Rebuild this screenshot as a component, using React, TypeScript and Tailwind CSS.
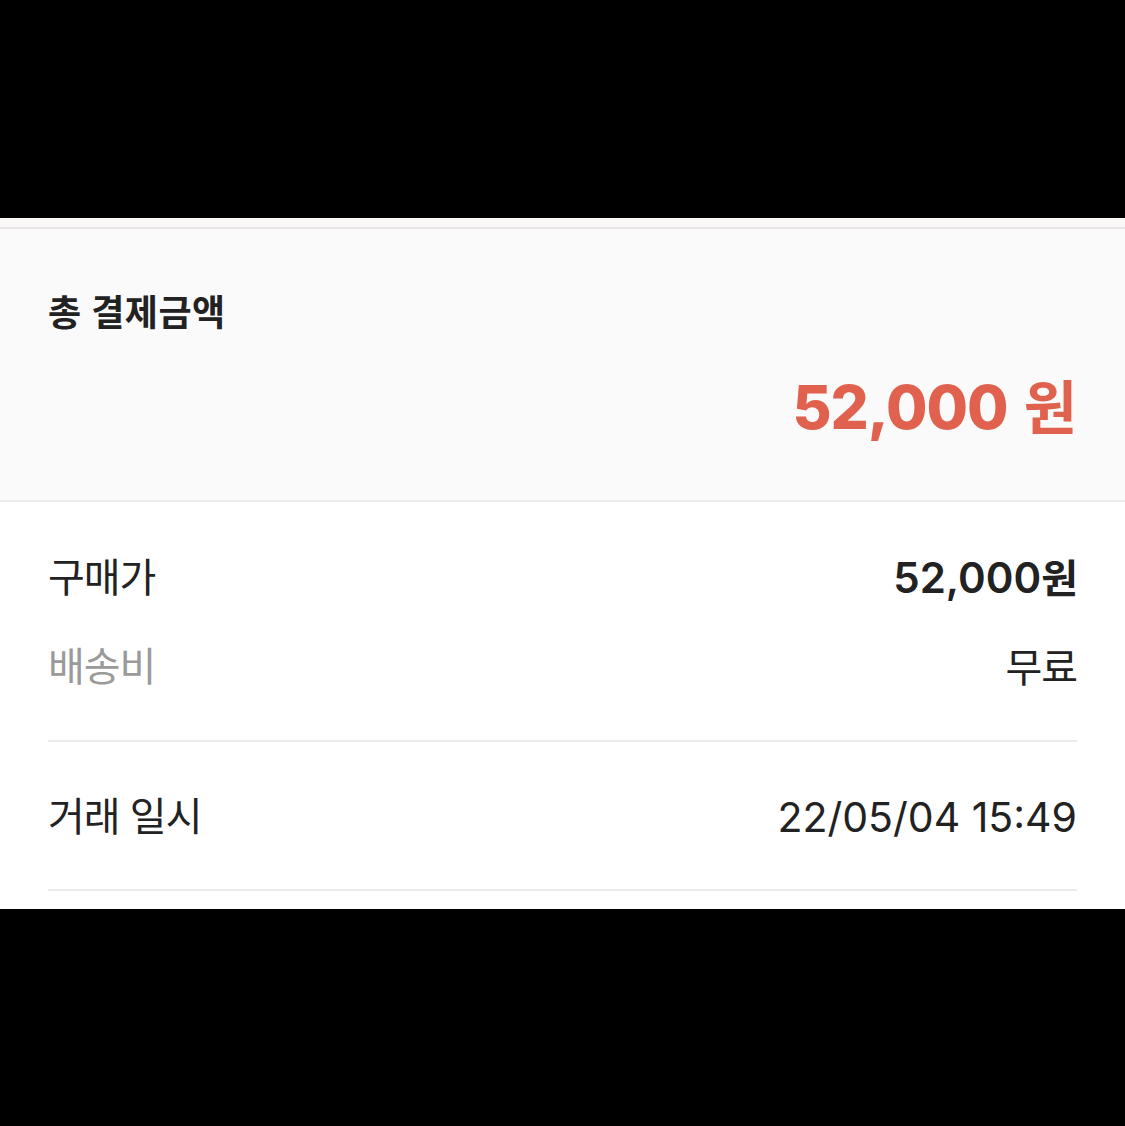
import React from 'react'

const rows = [
    { label: '구매가', value: '52,000', unit: '원', labelTone: 'text-[#222222]', bold: true },
    { label: '배송비', value: '', unit: '무료', labelTone: 'text-[#9a9a9a]', bold: false },
]

export default function App() {
    return (
        <div className="flex h-[1126px] flex-col bg-black font-['Inter','Noto_Sans_CJK_KR',sans-serif] text-[#222222]">
            <div className="h-[218px] shrink-0" />

            <div className="shrink-0 bg-white">
                {/* thin top band */}
                <div className="h-[9px] bg-[#faf7f7]" />
                <div className="h-[2px] bg-[#e7e5e7]" />

                {/* total panel */}
                <div className="flex flex-col border-b-2 border-[#ebebeb] bg-[#fafafa] pb-[56px] pl-12 pr-[50px] pt-[62px]">
                    <div className="text-[36px] font-semibold leading-[44px] tracking-[0.5px]">총 결제금액</div>
                    <div className="mt-9 flex items-baseline justify-end text-[60px] font-extrabold leading-[72px] text-[#e0624e]">
                        <span className="tracking-[-1px]">52,000</span>
                        <span className="ml-[16px] text-[58px] font-bold tracking-[-2px]">원</span>
                    </div>
                </div>

                {/* detail rows */}
                <div className="px-12 pt-12">
                    <div className="flex flex-col gap-[33px]">
                        {rows.map((r) => (
                            <div key={r.label} className="flex h-14 items-center justify-between">
                                <span className={`text-[40px] leading-[56px] tracking-[-1px] ${r.labelTone}`}>{r.label}</span>
                                <span className={`text-[42px] leading-[56px] ${r.bold ? 'font-semibold' : ''}`}>
                                    {r.value}
                                    <span className="text-[40px] tracking-[-1px]">{r.unit}</span>
                                </span>
                            </div>
                        ))}
                    </div>
                    <div className="mt-[45px] h-[2px] bg-[#ebebeb]" />
                    <div className="mt-[47px] flex h-14 items-center justify-between">
                        <span className="text-[40px] leading-[56px] tracking-[-1px]">거래 일시</span>
                        <span className="text-[41px] leading-[56px]">22/05/04 15:49</span>
                    </div>
                    <div className="mt-[44px] h-[2px] bg-[#ebebeb]" />
                    <div className="h-[18px]" />
                </div>
            </div>
        </div>
    )
}
